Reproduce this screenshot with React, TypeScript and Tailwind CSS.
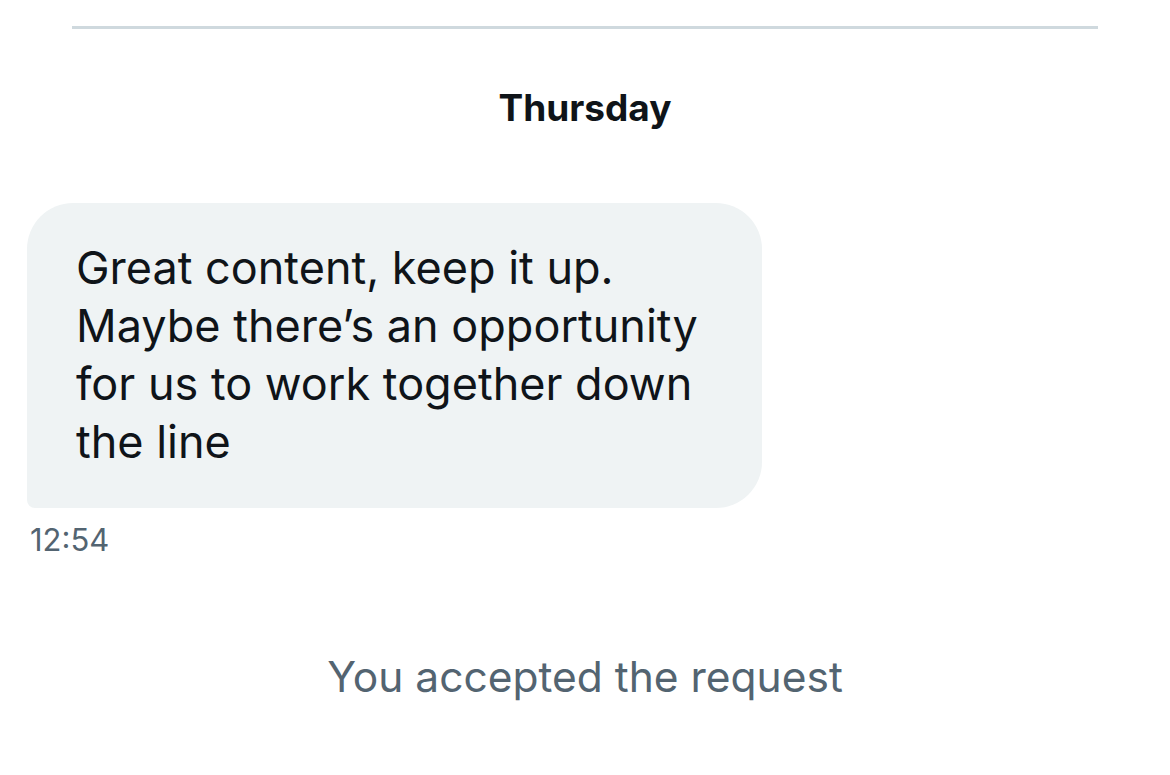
import React from 'react';

export default function App() {
    return (
        <div className="w-[1170px] h-[775px] bg-white font-['Inter','Liberation_Sans',sans-serif] text-[#0f1419] overflow-hidden">
            {/* Divider */}
            <div className="pt-[26px] pl-[72px]">
                <div className="w-[1026px] h-[3px] bg-[#cfd9de]" />
            </div>

            {/* Day label */}
            <div className="mt-[55px] text-center text-[37px] leading-[48px] font-bold">
                Thursday
            </div>

            {/* Message */}
            <div className="mt-[71px] pl-[27px]">
                <div className="w-[735px] bg-[#eff3f4] rounded-[46px] rounded-bl-[8px] pl-[49px] pr-6 pt-[36px] pb-[37px] text-[45px] leading-[58px]">
                    Great content, keep it up.
                    <br />
                    Maybe there’s an opportunity
                    <br />
                    for us to work together down
                    <br />
                    the line
                </div>
                <div className="mt-[14px] pl-[3px] text-[31px] leading-[36px] text-[#536471]">12:54</div>
            </div>

            {/* System notice */}
            <div className="mt-[91px] text-center text-[42.5px] leading-[56px] text-[#536471]">
                You accepted the request
            </div>
        </div>
    );
}
